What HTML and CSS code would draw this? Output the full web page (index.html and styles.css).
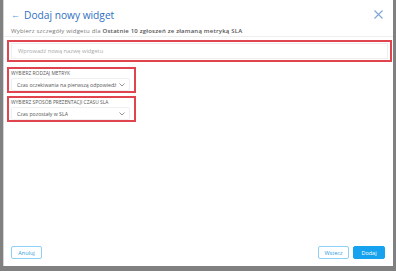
FILE: index.html
```html
<!DOCTYPE html>
<html lang="pl">
<head>
    <meta charset="UTF-8">
    <meta name="viewport" content="width=device-width, initial-scale=1.0">
    <title>Dodaj nowy widget</title>
    <link rel="stylesheet" href="styles.css">
</head>
<body>
    <div class="dialog">
        <div class="dialog-header">
            <div class="title-row">
                <span class="back">&larr;</span>
                <h1>Dodaj nowy widget</h1>
                <span class="close">
                    <svg width="9" height="9" viewBox="0 0 9 9"><path d="M0.5 0.5 L8.5 8.5 M8.5 0.5 L0.5 8.5" stroke="#7fa6d6" stroke-width="1.1" fill="none"/></svg>
                </span>
            </div>
            <p class="subtitle">Wybierz szczegóły widgetu dla <b>Ostatnie 10 zgłoszeń ze złamaną metryką SLA</b></p>
        </div>

        <div class="dialog-body">
            <div class="mark mark-wide">
                <div class="text-input">Wprowadź nową nazwę widgetu</div>
            </div>

            <div class="mark mark-field">
                <div class="field-label">WYBIERZ RODZAJ METRYK</div>
                <div class="select">
                    <span class="select-value">Czas oczekiwania na pierwszą odpowiedź</span>
                    <svg width="6" height="4" viewBox="0 0 6 4"><path d="M0.5 0.5 L3 3 L5.5 0.5" stroke="#777" stroke-width="0.8" fill="none"/></svg>
                </div>
            </div>

            <div class="mark mark-field">
                <div class="field-label">WYBIERZ SPOSÓB PREZENTACJI CZASU SLA</div>
                <div class="select">
                    <span class="select-value">Czas pozostały w SLA</span>
                    <svg width="6" height="4" viewBox="0 0 6 4"><path d="M0.5 0.5 L3 3 L5.5 0.5" stroke="#777" stroke-width="0.8" fill="none"/></svg>
                </div>
            </div>
        </div>

        <div class="dialog-footer">
            <button class="btn btn-outline">Anuluj</button>
            <div class="right-actions">
                <button class="btn btn-outline">Wstecz</button>
                <button class="btn btn-primary">Dodaj</button>
            </div>
        </div>
    </div>
</body>
</html>
```

FILE: styles.css
```css
html, body {
    margin: 0;
    padding: 0;
}
body {
    width: 396px;
    height: 271px;
    background-color: #808080;
    font-family: "Open Sans", Arial, sans-serif;
    box-sizing: border-box;
    padding: 0 3px 5px 3px;
}
.dialog {
    background-color: white;
    height: 100%;
    box-sizing: border-box;
    border-left: 1px solid #d6d6d6;
    display: flex;
    flex-direction: column;
}
.dialog-header {
    padding: 6px 10px 0 7px;
    border-bottom: 1px solid #eeeeee;
}
.title-row {
    display: flex;
    align-items: center;
    height: 18px;
}
.back {
    color: #5b9be0;
    font-size: 9px;
    margin-right: 4px;
    line-height: 18px;
}
h1 {
    margin: 0;
    font-size: 10.2px;
    font-weight: 400;
    color: #2f6fbf;
    flex: 1;
    line-height: 18px;
}
.close {
    display: flex;
    margin-top: -2px;
}
.subtitle {
    margin: 3px 0 1px 0;
    font-size: 6px;
    letter-spacing: 0.2px;
    line-height: 8px;
    color: #777;
    white-space: nowrap;
}
.subtitle b {
    color: #555;
    font-weight: 600;
}
.dialog-body {
    flex: 1;
    padding: 3px 1px 0 3px;
    display: flex;
    flex-direction: column;
    gap: 3px;
}
.mark {
    border: 2px solid #e0454f;
    box-sizing: border-box;
}
.mark-wide {
    padding: 1px 2px;
    margin-bottom: 2px;
}
.text-input {
    height: 14px;
    border: 1px solid #eeeeee;
    font-size: 5.7px;
    color: #aaa;
    display: flex;
    align-items: center;
    padding-left: 6px;
}
.mark-field {
    width: 129px;
    padding: 0 4px 0 2px;
}
.field-label {
    font-size: 4.9px;
    color: #555;
    margin-bottom: 1px;
    line-height: 8px;
    white-space: nowrap;
}
.select {
    height: 11px;
    border: 1px solid #f0f0f0;
    display: flex;
    align-items: center;
    justify-content: space-between;
    padding: 0 4px 0 5px;
    font-size: 5.2px;
    color: #555;
    border-radius: 2px;
    white-space: nowrap;
}
.select-value {
    overflow: hidden;
}
.select svg {
    flex-shrink: 0;
}
.dialog-footer {
    display: flex;
    justify-content: space-between;
    align-items: center;
    padding: 0 8px 7px 7px;
}
.right-actions {
    display: flex;
    gap: 4px;
}
.btn {
    font-family: "Open Sans", Arial, sans-serif;
    font-size: 5.5px;
    height: 13px;
    width: 31px;
    padding: 0;
    border-radius: 2px;
    cursor: pointer;
}
.btn-outline {
    background-color: white;
    border: 1px solid #8fd0f5;
    color: #2a9be0;
}
.btn-primary {
    background-color: #16a2ee;
    border: 1px solid #16a2ee;
    color: white;
    width: 32px;
}
```
